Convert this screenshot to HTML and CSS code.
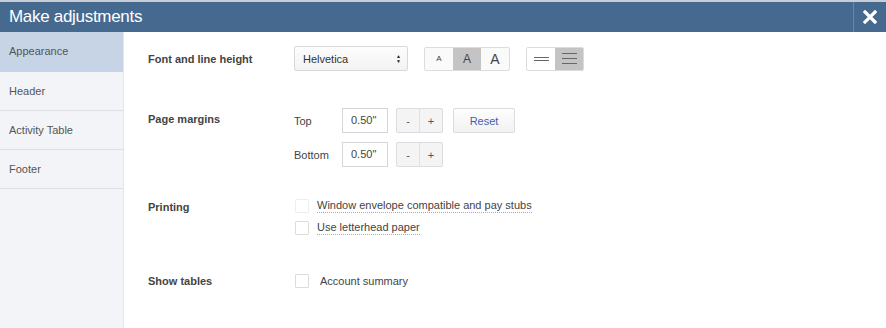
FILE: index.html
```html
<!DOCTYPE html>
<html lang="en">
<head>
  <meta charset="UTF-8">
  <title>Make adjustments</title>
  <link rel="stylesheet" href="styles.css">
</head>
<body>
  <div class="topbar">
    <h1>Make adjustments</h1>
    <button class="close" aria-label="Close">
      <svg width="14" height="14" viewBox="0 0 14 14"><path d="M2 2 L12 12 M12 2 L2 12" stroke="#fff" stroke-width="3.2" stroke-linecap="square"/></svg>
    </button>
  </div>
  <div class="main">
    <ul class="sidebar">
      <li class="active">Appearance</li>
      <li>Header</li>
      <li>Activity Table</li>
      <li>Footer</li>
    </ul>
    <div class="content">
      <div class="row row-font">
        <div class="label">Font and line height</div>
        <div class="controls">
          <div class="select">Helvetica <span class="arrows">&#9650;<br>&#9660;</span></div>
          <div class="btn-group sizes">
            <span class="sz small">A</span>
            <span class="sz mid on">A</span>
            <span class="sz large">A</span>
          </div>
          <div class="btn-group lines">
            <span class="ln tight"><i></i><i></i></span>
            <span class="ln loose on"><i></i><i></i><i></i></span>
          </div>
        </div>
      </div>
      <div class="row row-margins">
        <div class="label">Page margins</div>
        <div class="margins">
          <div class="mrow">
            <span class="mlabel">Top</span>
            <span class="input">0.50"</span>
            <div class="btn-group step"><span>-</span><span>+</span></div>
            <span class="reset">Reset</span>
          </div>
          <div class="mrow">
            <span class="mlabel">Bottom</span>
            <span class="input">0.50"</span>
            <div class="btn-group step"><span>-</span><span>+</span></div>
          </div>
        </div>
      </div>
      <div class="row row-print">
        <div class="label">Printing</div>
        <div class="checks">
          <label class="check"><span class="box faint"></span><span class="dotted">Window envelope compatible and pay stubs</span></label>
          <label class="check"><span class="box"></span><span class="dotted">Use letterhead paper</span></label>
        </div>
      </div>
      <div class="row row-tables">
        <div class="label">Show tables</div>
        <div class="checks">
          <label class="check"><span class="box"></span><span class="plain">Account summary</span></label>
        </div>
      </div>
    </div>
  </div>
</body>
</html>
```

FILE: styles.css
```css
body {
  margin: 0;
  font-family: "Liberation Sans", Arial, sans-serif;
  color: #444;
  background: #fff;
  width: 886px;
  height: 328px;
  overflow: hidden;
}
/* Title bar */
.topbar {
  height: 30px;
  border-top: 2px solid #c9ced6;
  background: #46698f;
  display: flex;
  align-items: center;
}
.topbar h1 {
  flex: 1;
  margin: 0;
  padding-left: 9px;
  font-size: 17px;
  letter-spacing: -0.3px;
  font-weight: normal;
  color: #fff;
}
.close {
  width: 33px;
  height: 30px;
  border: none;
  border-left: 1px solid #6b87a8;
  background: transparent;
  display: flex;
  align-items: center;
  justify-content: center;
  padding: 0;
}
.main {
  display: flex;
  height: 296px;
}
/* Left menu */
.sidebar {
  list-style: none;
  margin: 0;
  padding: 0;
  width: 123px;
  background: #f2f4f7;
  border-right: 1px solid #e1e4e8;
}
.sidebar li {
  height: 38px;
  line-height: 38px;
  padding-left: 9px;
  font-size: 11px;
  color: #555;
  border-bottom: 1px solid #dcdfe3;
}
.sidebar li.active {
  height: 39px;
  line-height: 39px;
  background: #c6d4e6;
  border-bottom-color: #c6d4e6;
}
/* Right panel */
.content {
  flex: 1;
  padding-left: 24px;
}
.row {
  display: flex;
}
.label {
  width: 146px;
  font-size: 11px;
  font-weight: bold;
  color: #444;
}
.row-font {
  margin-top: 14px;
  height: 25px;
  align-items: center;
}
.controls {
  display: flex;
  align-items: center;
}
.select {
  width: 98px;
  height: 23px;
  padding: 0 6px 0 8px;
  border: 1px solid #d6d8db;
  border-radius: 2px;
  background: linear-gradient(#fdfdfd, #f3f3f3);
  display: flex;
  align-items: center;
  justify-content: space-between;
  font-size: 11px;
  color: #333;
}
.arrows {
  font-size: 5px;
  line-height: 5px;
  color: #222;
  text-align: center;
}
.btn-group {
  display: flex;
  border: 1px solid #dadcdf;
  border-radius: 2px;
  background: #fafafa;
}
.sizes {
  margin-left: 16px;
}
.sz {
  width: 28px;
  height: 22px;
  display: flex;
  align-items: center;
  justify-content: center;
  color: #444;
}
.sz.small { font-size: 8px; }
.sz.mid { font-size: 12px; }
.sz.large { font-size: 14px; }
.sz.on, .ln.on {
  background: #c4c4c4;
}
.lines {
  margin-left: 16px;
  background: #fff;
}
.ln {
  width: 28px;
  height: 22px;
  display: flex;
  flex-direction: column;
  align-items: center;
  justify-content: center;
  gap: 2px;
}
.ln.loose { gap: 4px; }
.ln i {
  display: block;
  width: 15px;
  height: 1px;
  background: #666;
}
.row-margins {
  margin-top: 37px;
}
.row-margins .label {
  padding-top: 5px;
}
.margins {
  display: flex;
  flex-direction: column;
  gap: 9px;
}
.mrow {
  display: flex;
  align-items: center;
  font-size: 11px;
}
.mlabel {
  width: 48px;
}
.input {
  width: 36px;
  height: 23px;
  line-height: 23px;
  padding-left: 8px;
  border: 1px solid #d4d6d9;
  color: #444;
}
.step {
  margin-left: 8px;
  background: #f4f4f4;
}
.step span {
  width: 22px;
  height: 23px;
  display: flex;
  align-items: center;
  justify-content: center;
  color: #555;
}
.step span + span {
  border-left: 1px solid #e0e0e0;
}
.reset {
  margin-left: 10px;
  width: 60px;
  height: 23px;
  border: 1px solid #dadcdf;
  border-radius: 2px;
  background: linear-gradient(#fdfdfd, #f2f2f2);
  display: flex;
  align-items: center;
  justify-content: center;
  color: #3d5fb0;
}
.row-print {
  margin-top: 32px;
}
.row-print .label {
  padding-top: 2px;
}
.checks {
  display: flex;
  flex-direction: column;
  gap: 8px;
  padding-left: 1px;
}
.check {
  display: flex;
  align-items: center;
  font-size: 11px;
  color: #444;
}
.box {
  width: 12px;
  height: 12px;
  border: 1px solid #dcdcdc;
  border-radius: 1px;
  margin-right: 8px;
}
.box.faint {
  border-color: #eeeeee;
}
.dotted {
  border-bottom: 1px dotted #aaa;
  padding-bottom: 1px;
}
.plain {
  margin-left: 3px;
}
.row-tables {
  margin-top: 39px;
}
.row-tables .label {
  padding-top: 1px;
}
```
